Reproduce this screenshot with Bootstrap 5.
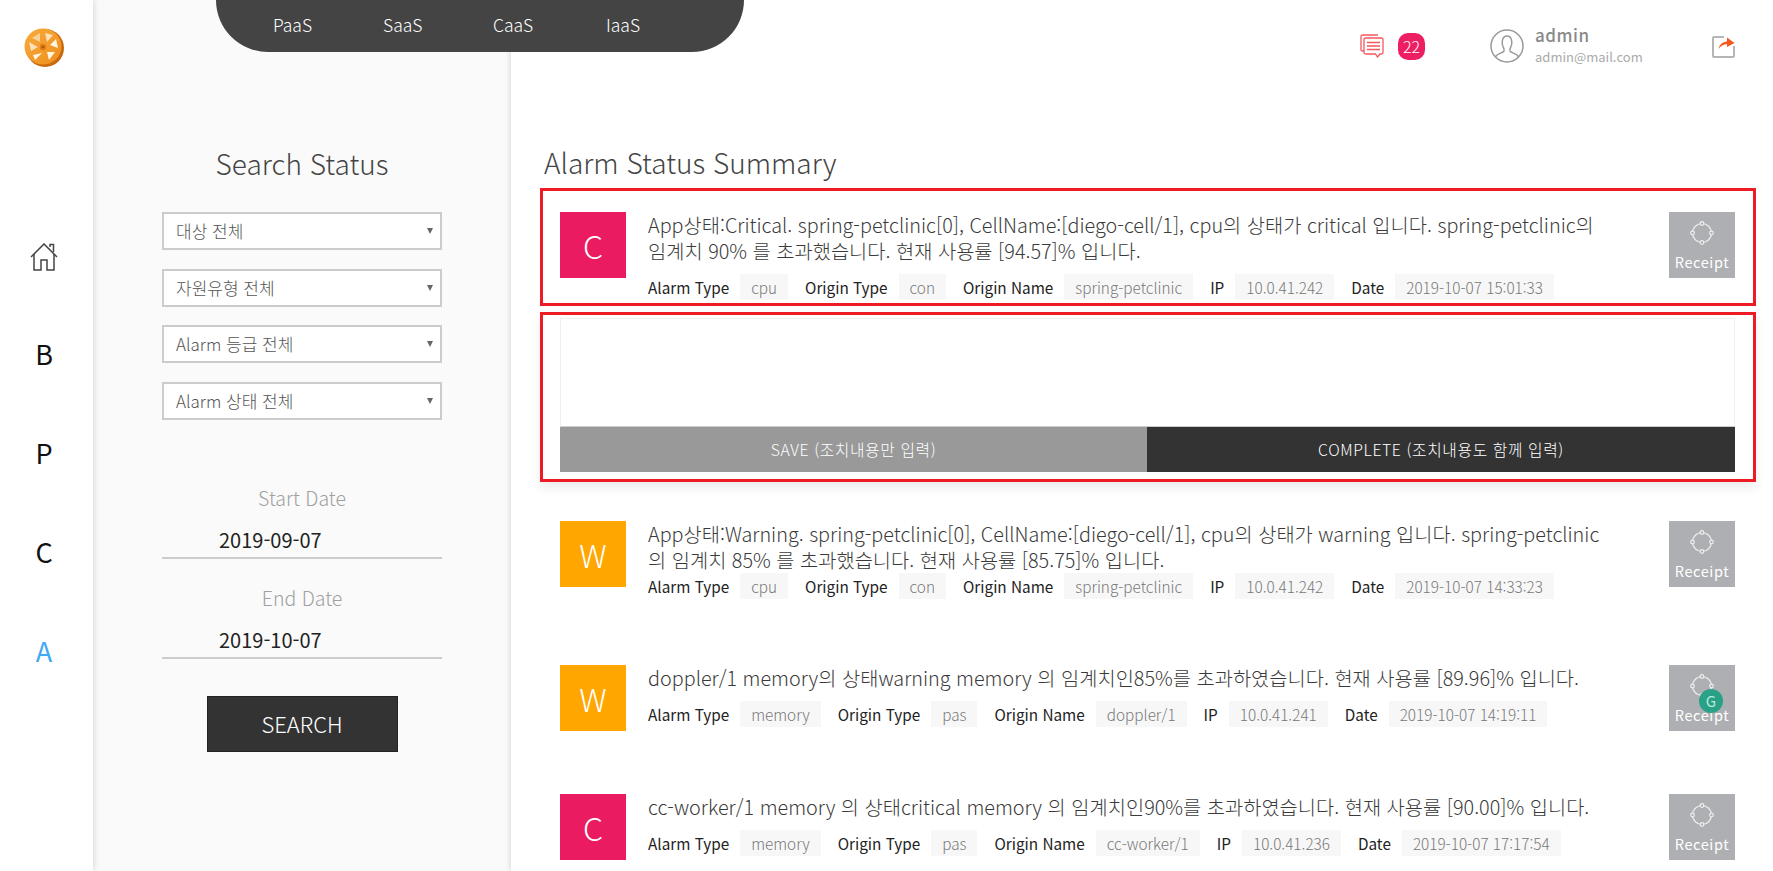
<!DOCTYPE html>
<html lang="ko">
<head>
  <meta charset="UTF-8"/>
  <meta name="viewport" content="width=device-width, initial-scale=1.0"/>
  <title>Alarm Status</title>
  <link href="https://cdn.jsdelivr.net/npm/bootstrap@5.3.0/dist/css/bootstrap.min.css" rel="stylesheet"/>
  <style>
    html, body { height: 871px; overflow: hidden; }
    body { font-family: "Noto Sans CJK KR", "Noto Sans", sans-serif; font-weight: 300; color: #333; background: #fff; }

    /* left rail */
    .rail { width: 93px; flex-shrink: 0; background: #fff; box-shadow: 1px 0 6px rgba(0,0,0,.14); z-index: 2; padding: 27px 5px 0 0; }
    .rail-logo { display: block; margin: 0 auto 176px; width: 42px; height: 40px; }
    .rail-link { display: flex; align-items: center; justify-content: center; height: 99px; font-size: 27px; font-weight: 400; color: #111; text-decoration: none; }
    .rail-home { height: 28px; margin-bottom: 34px; }
    .rail-link.is-active { color: #3fa9f5; }

    /* search panel */
    .search-panel { width: 418px; flex-shrink: 0; background: #fafafa; padding: 144px 69px 0 69px; text-align: center; }
    .search-title { font-size: 28px; line-height: 38px; font-weight: 300; color: #444; margin-bottom: 30px; }
    .status-select { height: 38px; margin-bottom: 18.5px; padding: 0 24px 0 12px; border: 2px solid #ccc; border-radius: 0; font-size: 17px; font-weight: 300; color: #555; background-color: #fff;
      background-image: url("data:image/svg+xml,%3csvg xmlns='http://www.w3.org/2000/svg' viewBox='0 0 6 6'%3e%3cpath fill='%23666' d='M0 0h6L3 6z'/%3e%3c/svg%3e"); background-size: 6px 6px; background-position: right 7px center; }
    .date-first { margin-top: 65px; }
    .date-label { font-size: 19.5px; line-height: 26px; color: #a0a0a0; margin-bottom: 8px; }
    .date-input { height: 40px; padding: 3px 0 0 57px; border: 0; border-bottom: 2px solid #ccc; border-radius: 0; background: transparent; font-size: 20px; font-weight: 400; color: #222; margin-bottom: 26px; }
    .date-input:focus { background: transparent; box-shadow: none; }
    .search-btn { width: 191px; height: 56px; margin-top: 11px; border-radius: 0; background: #333; color: #fff; font-size: 22px; font-weight: 300; border: 1px solid #222; }

    /* top tab pill */
    .top-tabs { position: absolute; top: 0; left: 216px; width: 528px; height: 52px; padding-left: 57px; background: #444; border-bottom-left-radius: 52px; border-bottom-right-radius: 52px; z-index: 3; }
    .top-tabs a { width: 110px; font-size: 17.5px; font-weight: 300; color: #fff; text-decoration: none; line-height: 50px; }
    .top-tabs a:last-child { margin-left: 3px; }

    /* main area */
    .main-area { flex-grow: 1; min-width: 0; background: #fff; box-shadow: -1px 0 5px rgba(0,0,0,.14); z-index: 2; padding: 0 17px 0 29px; }
    .head-bar { height: 92px; margin-bottom: 52px; padding-right: 21px; }
    .msg-icon { width: 24px; height: 24px; }
    .msg-count { width: 27px; height: 27px; margin-left: 14px; border-radius: 10px; background: #ed1e62; color: #fff; font-size: 16px; }
    .user-icon { width: 34px; height: 34px; margin-left: 65px; }
    .user-info { width: 177px; margin-left: 11px; }
    .user-name { font-size: 17px; line-height: 22px; font-weight: 500; color: #8a8a8a; letter-spacing: .5px; }
    .user-mail { font-size: 13px; line-height: 22px; font-weight: 400; color: #aaa; }
    .out-icon { width: 23px; height: 23px; }
    .main-title { font-size: 28px; line-height: 38px; font-weight: 300; color: #444; margin: -1px 0 7px 4px; }

    .alarm-row { display: flex; align-items: flex-start; padding: 0 21px 66px 20px; }
    .alarm-row.is-boxed { padding: 21px 18px 3px 17px; border: 3px solid #ed1c24; }
    .level-mark { width: 66px; height: 66px; margin-bottom: -3px; flex-shrink: 0; display: flex; align-items: center; justify-content: center; color: #fff; font-size: 32px; font-weight: 300; }
    .level-c { background: #ea1b61; }
    .level-w { background: #ffa600; }
    .alarm-body { flex-grow: 1; min-width: 0; margin-left: 22px; }
    .alarm-msg { font-size: 19.8px; line-height: 26px; color: #3a3a3a; margin-bottom: 10px; white-space: nowrap; }
    .alarm-msg.is-tight { margin-bottom: 0; }
    .alarm-meta { display: flex; align-items: center; font-size: 15.3px; font-weight: 400; color: #222; white-space: nowrap; }
    .meta-value { height: 26px; line-height: 26px; padding: 0 11px; margin: 0 17px 0 11px; background: #f7f7f7; color: #777; font-weight: 300; }
    .receipt-btn { position: relative; width: 66px; height: 66px; margin-bottom: -3px; flex-shrink: 0; padding: 0; border: 0; border-radius: 0; background: #aeafb3; color: #fff; font-size: 14.5px; font-weight: 400; letter-spacing: .6px; display: flex; flex-direction: column; align-items: center; }
    .receipt-btn svg { width: 24px; height: 24px; margin: 9px 0 8px; }
    .receipt-btn span { line-height: 18px; }
    .gram-dot { position: absolute; left: 30px; top: 24px; width: 24px; height: 24px; border-radius: 50%; background: rgba(28,160,130,.92); color: #bfe8dc; font-size: 15px; line-height: 24px !important; text-align: center; letter-spacing: 0; }

    .note-box { margin: 6px 0 39px; padding: 3px 18px 7px 17px; border: 3px solid #ed1c24; box-shadow: 0 6px 10px rgba(0,0,0,.08); }
    .note-text { display: block; width: 100%; height: 109px; border: 1px solid #eee; border-bottom-color: #ccc; resize: none; }
    .note-btn { height: 45px; border: 0; border-radius: 0; color: #fff; font-size: 15.8px; font-weight: 300; letter-spacing: .6px; }
    .note-save { width: 587px; background: #999; }
    .note-done { flex-grow: 1; background: #333; }
  </style>
</head>
<body class="d-flex position-relative">

  <!-- left rail -->
  <nav class="rail">
    <svg class="rail-logo" viewBox="0 0 42 40">
      <defs><linearGradient id="lg" x1="0" y1="0" x2="1" y2="1"><stop offset="0" stop-color="#f7ab3c"/><stop offset="1" stop-color="#ee8f1e"/></linearGradient></defs>
      <circle cx="22" cy="21" r="19" fill="#c9680c"/>
      <ellipse cx="20" cy="19.500" rx="18.500" ry="18" fill="url(#lg)"/>
      <g fill="#fff6e6">
        <path d="M22 6 30 8 24 15Z" opacity=".75"/><path d="M33 12 35 21 27 18Z"/><path d="M32 25 26 33 24 25Z"/>
        <path d="M19 26 12 33 10 28Z"/><path d="M8 24 6 15 15 20Z" opacity=".75"/><path d="M9 11 17 6 17 15Z" opacity=".55"/>
      </g>
      <circle cx="20" cy="20" r="3.200" fill="#e07c12"/><circle cx="20" cy="20" r="1.300" fill="#a85a0c"/>
    </svg>
    <a class="rail-link rail-home" href="#">
      <svg width="28" height="28" viewBox="0 0 28 28" fill="none" stroke="#444" stroke-width="1.500"><path d="M1 14 14 1l13 13"/><path d="M20 4V1.500h3.500V9"/><path d="M4 11v16h7V17h6v10h7V11"/></svg>
    </a>
    <a class="rail-link" href="#">B</a>
    <a class="rail-link" href="#">P</a>
    <a class="rail-link" href="#">C</a>
    <a class="rail-link is-active" href="#">A</a>
  </nav>

  <!-- tabs over the top -->
  <div class="top-tabs d-flex">
    <a href="#">PaaS</a>
    <a href="#">SaaS</a>
    <a href="#">CaaS</a>
    <a href="#">IaaS</a>
  </div>

  <!-- search -->
  <aside class="search-panel">
    <h2 class="search-title">Search Status</h2>
    <select class="form-select status-select"><option>대상 전체</option></select>
    <select class="form-select status-select"><option>자원유형 전체</option></select>
    <select class="form-select status-select"><option>Alarm 등급 전체</option></select>
    <select class="form-select status-select"><option>Alarm 상태 전체</option></select>
    <div class="date-label date-first">Start Date</div>
    <input type="text" class="form-control date-input" value="2019-09-07"/>
    <div class="date-label">End Date</div>
    <input type="text" class="form-control date-input" value="2019-10-07"/>
    <button type="button" class="btn search-btn">SEARCH</button>
  </aside>

  <!-- main -->
  <main class="main-area">
    <header class="head-bar d-flex align-items-center justify-content-end">
      <svg class="msg-icon" viewBox="0 0 24 24" fill="none" stroke="#f4585c" stroke-width="1.300">
        <path d="M4 17H2.500Q1 17 1 15.500V2.500Q1 1 2.500 1H18"/>
        <path d="M6 4h15.500Q23 4 23 5.500V18.500Q23 20 21.500 20H20l-2.500 3-2-3H6Q4 20 4 18.500V5.500Q4 4 6 4Z" fill="#fff"/>
        <path d="M7 8.500h13M7 12h13M7 15.500h13" stroke-width="1.600"/>
      </svg>
      <span class="msg-count d-flex align-items-center justify-content-center">22</span>
      <svg class="user-icon" viewBox="0 0 34 34" fill="none" stroke="#999" stroke-width="1.500">
        <circle cx="17" cy="17" r="16"/>
        <path d="M5.500 28c1.500-4 7-3.500 8.500-6 .7-1.300 0-2.500-.8-4-1.700-3-1.700-11 3.800-11s5.500 8 3.800 11c-.8 1.500-1.500 2.700-.8 4 1.500 2.500 7 2 8.500 6"/>
      </svg>
      <div class="user-info">
        <div class="user-name">admin</div>
        <div class="user-mail">admin@mail.com</div>
      </div>
      <svg class="out-icon" viewBox="0 0 23 23" fill="none">
        <path d="M12 2H2Q1 2 1 3V21Q1 22 2 22H21Q22 22 22 21V11" stroke="#b5b5b5" stroke-width="2"/>
        <path d="M6.500 14C7.500 9.500 10.500 6.800 15 6.500V2.500l7.500 5.500L15 12V9C11.500 9.200 8.500 11 6.500 14Z" fill="#f4581c"/>
      </svg>
    </header>

    <h2 class="main-title">Alarm Status Summary</h2>

    <div class="alarm-row is-boxed">
      <div class="level-mark level-c">C</div>
      <div class="alarm-body">
        <div class="alarm-msg">App상태:Critical. spring-petclinic[0], CellName:[diego-cell/1], cpu의 상태가 critical 입니다. spring-petclinic의<br/>임계치 90% 를 초과했습니다. 현재 사용률 [94.57]% 입니다.</div>
        <div class="alarm-meta">
          <span>Alarm Type</span><span class="meta-value">cpu</span>
          <span>Origin Type</span><span class="meta-value">con</span>
          <span>Origin Name</span><span class="meta-value">spring-petclinic</span>
          <span>IP</span><span class="meta-value">10.0.41.242</span>
          <span>Date</span><span class="meta-value">2019-10-07 15:01:33</span>
        </div>
      </div>
      <button type="button" class="btn receipt-btn">
        <svg viewBox="0 0 24 24" fill="#aeafb3" stroke="#eee" stroke-width="1.200"><circle cx="12" cy="12" r="9.500"/><circle cx="12" cy="2.500" r="1.800"/><circle cx="21.500" cy="12" r="1.800"/><circle cx="12" cy="21.500" r="1.800"/><circle cx="2.500" cy="12" r="1.800"/></svg>
        <span>Receipt</span>
      </button>
    </div>

    <div class="note-box">
      <textarea class="note-text"></textarea>
      <div class="d-flex">
        <button type="button" class="btn note-btn note-save">SAVE (조치내용만 입력)</button>
        <button type="button" class="btn note-btn note-done">COMPLETE (조치내용도 함께 입력)</button>
      </div>
    </div>

    <div class="alarm-row">
      <div class="level-mark level-w">W</div>
      <div class="alarm-body">
        <div class="alarm-msg is-tight">App상태:Warning. spring-petclinic[0], CellName:[diego-cell/1], cpu의 상태가 warning 입니다. spring-petclinic<br/>의 임계치 85% 를 초과했습니다. 현재 사용률 [85.75]% 입니다.</div>
        <div class="alarm-meta">
          <span>Alarm Type</span><span class="meta-value">cpu</span>
          <span>Origin Type</span><span class="meta-value">con</span>
          <span>Origin Name</span><span class="meta-value">spring-petclinic</span>
          <span>IP</span><span class="meta-value">10.0.41.242</span>
          <span>Date</span><span class="meta-value">2019-10-07 14:33:23</span>
        </div>
      </div>
      <button type="button" class="btn receipt-btn">
        <svg viewBox="0 0 24 24" fill="#aeafb3" stroke="#eee" stroke-width="1.200"><circle cx="12" cy="12" r="9.500"/><circle cx="12" cy="2.500" r="1.800"/><circle cx="21.500" cy="12" r="1.800"/><circle cx="12" cy="21.500" r="1.800"/><circle cx="2.500" cy="12" r="1.800"/></svg>
        <span>Receipt</span>
      </button>
    </div>

    <div class="alarm-row">
      <div class="level-mark level-w">W</div>
      <div class="alarm-body">
        <div class="alarm-msg">doppler/1 memory의 상태warning memory 의 임계치인85%를 초과하였습니다. 현재 사용률 [89.96]% 입니다.</div>
        <div class="alarm-meta">
          <span>Alarm Type</span><span class="meta-value">memory</span>
          <span>Origin Type</span><span class="meta-value">pas</span>
          <span>Origin Name</span><span class="meta-value">doppler/1</span>
          <span>IP</span><span class="meta-value">10.0.41.241</span>
          <span>Date</span><span class="meta-value">2019-10-07 14:19:11</span>
        </div>
      </div>
      <button type="button" class="btn receipt-btn">
        <svg viewBox="0 0 24 24" fill="#aeafb3" stroke="#eee" stroke-width="1.200"><circle cx="12" cy="12" r="9.500"/><circle cx="12" cy="2.500" r="1.800"/><circle cx="21.500" cy="12" r="1.800"/><circle cx="12" cy="21.500" r="1.800"/><circle cx="2.500" cy="12" r="1.800"/></svg>
        <span>Receipt</span>
        <span class="gram-dot">G</span>
      </button>
    </div>

    <div class="alarm-row">
      <div class="level-mark level-c">C</div>
      <div class="alarm-body">
        <div class="alarm-msg">cc-worker/1 memory 의 상태critical memory 의 임계치인90%를 초과하였습니다. 현재 사용률 [90.00]% 입니다.</div>
        <div class="alarm-meta">
          <span>Alarm Type</span><span class="meta-value">memory</span>
          <span>Origin Type</span><span class="meta-value">pas</span>
          <span>Origin Name</span><span class="meta-value">cc-worker/1</span>
          <span>IP</span><span class="meta-value">10.0.41.236</span>
          <span>Date</span><span class="meta-value">2019-10-07 17:17:54</span>
        </div>
      </div>
      <button type="button" class="btn receipt-btn">
        <svg viewBox="0 0 24 24" fill="#aeafb3" stroke="#eee" stroke-width="1.200"><circle cx="12" cy="12" r="9.500"/><circle cx="12" cy="2.500" r="1.800"/><circle cx="21.500" cy="12" r="1.800"/><circle cx="12" cy="21.500" r="1.800"/><circle cx="2.500" cy="12" r="1.800"/></svg>
        <span>Receipt</span>
      </button>
    </div>
  </main>

  <script src="https://cdn.jsdelivr.net/npm/bootstrap@5.3.0/dist/js/bootstrap.bundle.min.js"></script>
</body>
</html>
